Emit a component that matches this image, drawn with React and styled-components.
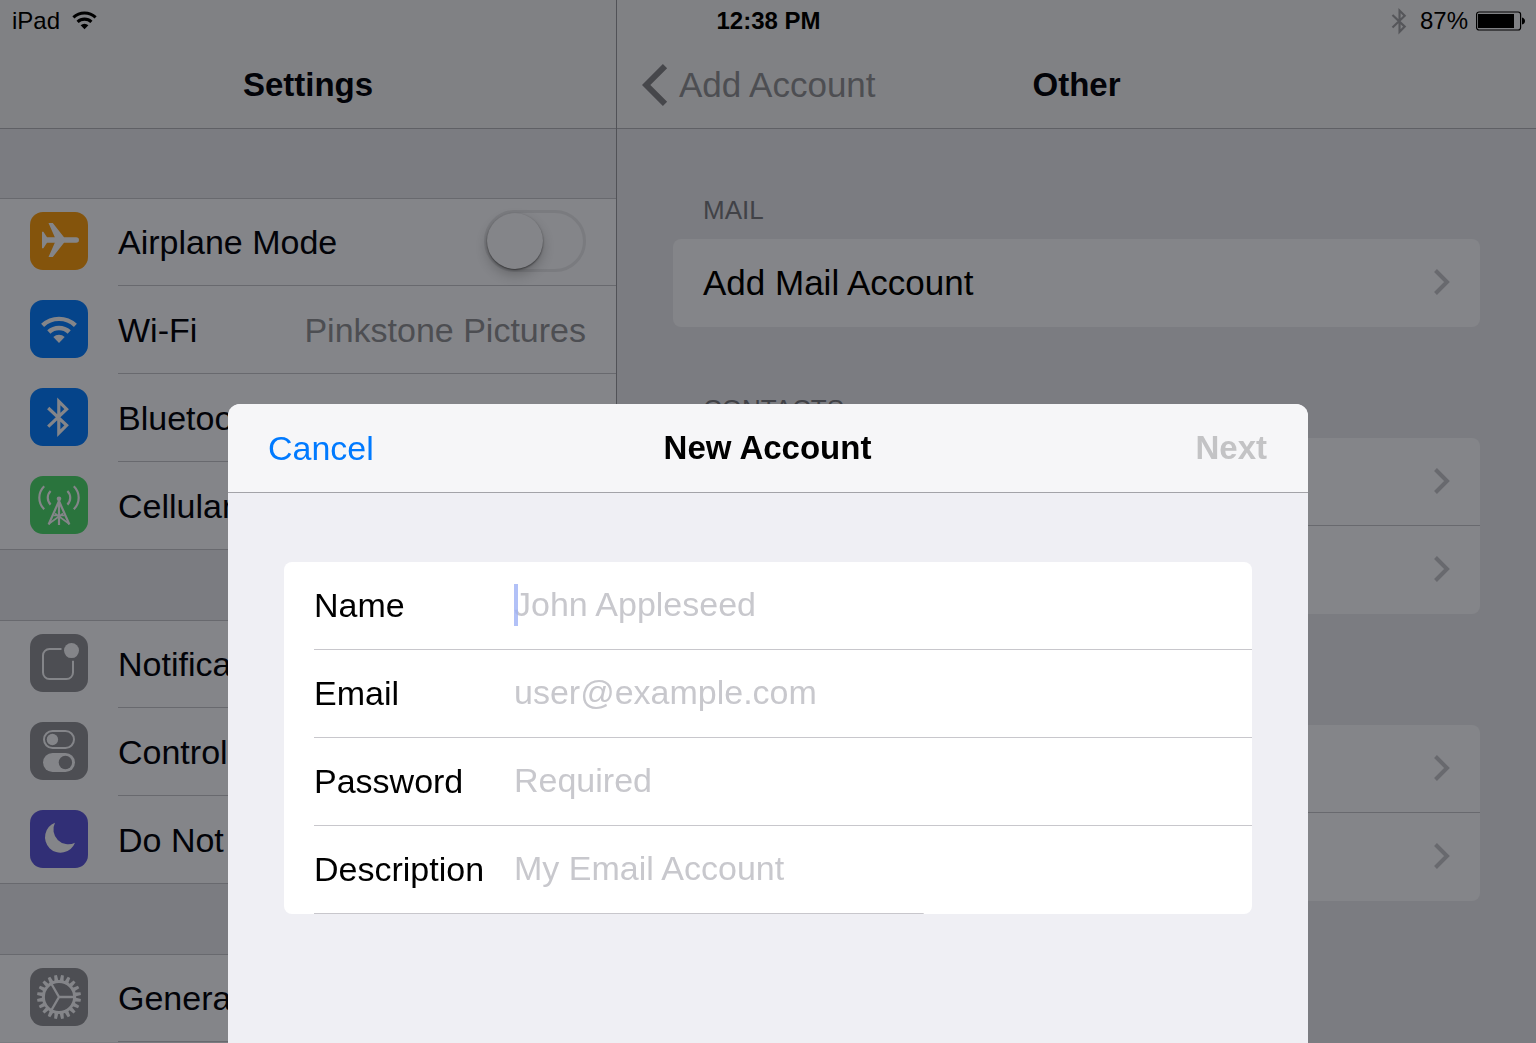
import styled, { createGlobalStyle } from "styled-components";

const colors = {
  bar: "#808184",
  pane: "#7b7c81",
  cell: "#848589",
  line: "#68696e",
  barLine: "#5f6065",
  text: "#020308",
  muted: "#4d4e52",
  glyph: "#848589",
};

const GlobalStyle = createGlobalStyle`
  * {
    box-sizing: border-box;
  }
  body {
    margin: 0;
    overflow: hidden;
    background-color: ${colors.pane};
    color: ${colors.text};
    font-family: "Liberation Sans", Arial, sans-serif;
    font-size: 34px;
    line-height: 40px;
  }
  button,
  input {
    margin: 0;
    padding: 0;
    border: 0;
    background: none;
    color: inherit;
    font: inherit;
    text-align: left;
  }
  ul {
    margin: 0;
    padding: 0;
    list-style: none;
  }
  svg {
    display: block;
    flex-shrink: 0;
  }
`;

const Screen = styled.div`
  display: grid;
  grid-template-columns: 308fr 460fr;
  height: 100vh;
  overflow: hidden;
`;

/* status bar */
const StatusBar = styled.header`
  position: absolute;
  top: 0;
  left: 0;
  right: 0;
  display: grid;
  grid-template-columns: 1fr auto 1fr;
  align-items: center;
  height: 41px;
  padding: 0 11px 0 12px;
  font-size: 24px;
  line-height: 28px;
  color: #000;
`;
const StatusGroup = styled.div`
  display: flex;
  align-items: center;
  justify-content: ${(props) => (props.$end ? "flex-end" : "flex-start")};
  gap: ${(props) => (props.$end ? "8px" : "12px")};
`;
const StatusPair = styled.span`
  display: flex;
  align-items: center;
  gap: 13px;
`;
const Clock = styled.time`
  font-weight: bold;
`;

/* panes */
const Pane = styled.section`
  min-width: 0;
  border-left: ${(props) => (props.$divided ? "1px solid #515257" : "0")};
`;
const NavBar = styled.div`
  display: grid;
  grid-template-columns: 1fr auto 1fr;
  align-items: center;
  height: 129px;
  padding: 41px 25px 0;
  background-color: ${colors.bar};
  border-bottom: 1px solid ${colors.barLine};
`;
const Title = styled.h1`
  grid-column: 2;
  margin: 0;
  font-size: 33px;
  font-weight: bold;
`;
const BackButton = styled.button`
  display: flex;
  align-items: center;
  gap: 11px;
  font-size: 35px;
  color: ${colors.muted};
`;

/* sidebar */
const SideList = styled.div`
  display: flex;
  flex-direction: column;
  gap: 70px;
  padding-top: 69px;
`;
const SideGroup = styled.ul`
  background-color: ${colors.cell};
  box-shadow: inset 0 1px ${colors.line};
`;
const SideItem = styled.li`
  border-bottom: ${(props) => (props.$last ? `1px solid ${colors.line}` : "0")};
`;
const SideRow = styled.button`
  display: flex;
  align-items: center;
  gap: 30px;
  width: 100%;
  height: ${(props) => (props.$last ? "87px" : "88px")};
  padding-left: 30px;
`;
const SideBody = styled.span`
  display: flex;
  flex: 1;
  align-items: center;
  justify-content: space-between;
  align-self: stretch;
  min-width: 0;
  padding-right: 30px;
  white-space: nowrap;
  border-bottom: ${(props) => (props.$last ? "0" : `1px solid ${colors.line}`)};
`;
const SideValue = styled.span`
  color: ${colors.muted};
`;
const IconTile = styled.span`
  flex-shrink: 0;
  width: 58px;
  height: 58px;
  margin-bottom: 2px;
  border-radius: 13px;
  background-color: ${(props) => props.$color};
  color: ${colors.glyph};
`;
const Switch = styled.input`
  appearance: none;
  width: 102px;
  height: 62px;
  margin-bottom: 2px;
  border: 3px solid #7a7b7f;
  border-radius: 31px;

  &::before {
    content: "";
    display: block;
    width: 56px;
    height: 56px;
    border-radius: 50%;
    background-color: ${colors.cell};
    box-shadow: 0 1px 2px rgba(0, 0, 0, 0.5), 0 6px 12px rgba(0, 0, 0, 0.22);
  }
  &:checked::before {
    margin-left: auto;
  }
`;

/* detail pane */
const Sections = styled.div`
  display: flex;
  flex-direction: column;
  gap: 70px;
  padding: 69px 56px 0;
`;
const SectionTitle = styled.h2`
  height: 41px;
  margin: 0;
  padding-left: 30px;
  font-size: 26px;
  font-weight: normal;
  line-height: 24px;
  color: #414247;
`;
const Card = styled.ul`
  overflow: hidden;
  border-radius: 8px;
  background-color: ${colors.cell};
`;
const CardRow = styled.button`
  display: flex;
  align-items: center;
  justify-content: space-between;
  width: 100%;
  height: 88px;
  padding: 0 30px;
  font-size: 35px;
  color: #000;
  border-bottom: ${(props) => (props.$last ? "0" : `1px solid ${colors.line}`)};

  svg {
    margin-left: auto;
    margin-bottom: 2px;
  }
`;

/* new account sheet */
const Backdrop = styled.div`
  position: fixed;
  inset: 0;
  display: flex;
  justify-content: center;
  padding-top: 404px;
`;
const Sheet = styled.form`
  width: 1080px;
  max-width: 100%;
  overflow: hidden;
  border-radius: 12px 12px 0 0;
  background-color: #efeff4;
`;
const SheetBar = styled.div`
  display: grid;
  grid-template-columns: 1fr auto 1fr;
  align-items: center;
  height: 89px;
  padding: 0 41px 0 40px;
  background-color: #f6f6f8;
  border-bottom: 1px solid #a3a3a8;
`;
const SheetTitle = styled.h2`
  margin: 0;
  font-size: 33px;
  font-weight: bold;
  color: #000;
`;
const CancelButton = styled.button`
  justify-self: start;
  color: #007aff;
`;
const NextButton = styled.button`
  justify-self: end;
  font-size: 33px;
  font-weight: bold;
  color: #c3c3c5;
`;
const Fields = styled.div`
  margin: 69px 56px;
  border-radius: 8px;
  background-color: #fff;
  color: #000;
`;
const Field = styled.div`
  display: grid;
  grid-template-columns: 200px 1fr;
  align-items: center;
  height: 88px;
  margin-left: 30px;
  padding-bottom: 3px;
  background: linear-gradient(#c8c7cc, #c8c7cc) left bottom no-repeat;
  background-size: ${(props) => (props.$last ? "65%" : "100%")} 1px;
`;
const InputWrap = styled.div`
  position: relative;
`;
const Input = styled.input`
  display: block;
  width: 100%;
  height: 42px;
  outline: 0;

  &::placeholder {
    color: #c8c8cd;
    opacity: 1;
  }
`;
const Caret = styled.span`
  position: absolute;
  top: 0;
  left: 0;
  width: 4px;
  height: 42px;
  background-color: #9fb1f5;
  opacity: 0.8;
`;

function WifiGlyph(props) {
  return (
    <svg fill="none" stroke="currentColor" aria-hidden="true" {...props}>
      <path d="M12.6 25.4A24 24 0 0 1 45.4 25.4" strokeWidth="4.4" />
      <path d="M18.8 32A15 15 0 0 1 39.2 32" strokeWidth="4.6" />
      <path d="M29 43L23.3 37A8.3 8.3 0 0 1 34.7 37Z" fill="currentColor" stroke="none" />
    </svg>
  );
}

function BluetoothGlyph(props) {
  return (
    <svg fill="none" stroke="currentColor" strokeWidth="3.2" aria-hidden="true" {...props}>
      <path d="M18.2 20L36.6 37.4L28.8 45.2V13.4L36.6 21.2L18.2 38.7" />
    </svg>
  );
}

function Battery() {
  return (
    <svg width="49" height="20" viewBox="0 0 49 20" aria-hidden="true">
      <rect x="0.6" y="1" width="44" height="18" rx="2.5" fill="none" stroke="currentColor" strokeWidth="1.2" />
      <rect x="2" y="3" width="36" height="14" fill="currentColor" />
      <path d="M46 6.5Q49 7.5 49 10T46 13.5Z" fill="currentColor" />
    </svg>
  );
}

function Chevron() {
  return (
    <svg width="16" height="26" viewBox="0 0 16 26" fill="none" aria-hidden="true">
      <path d="M1.5 1.5L13 13L1.5 24.5" stroke="#68696e" strokeWidth="4" />
    </svg>
  );
}

function BackChevron() {
  return (
    <svg width="26" height="42" viewBox="0 0 26 42" fill="none" aria-hidden="true">
      <path d="M23 2.2L4.2 21L23 39.8" stroke="#46474b" strokeWidth="6" />
    </svg>
  );
}

const TEETH = Array.from({ length: 20 }, (_, i) => i * 18 + 9);

const glyphs = {
  airplane: (
    <svg viewBox="0 0 58 58" fill="currentColor">
      <path d="M46.2 25.2H34L22.8 11H18.5L24.8 25.2H17L13.4 19.8H12V36.2H13.4L17 30.8H24.8L18.5 45H22.8L34 30.8H46.2A2.8 2.8 0 0 0 46.2 25.2Z" />
    </svg>
  ),
  wifi: <WifiGlyph viewBox="0 0 58 58" />,
  bluetooth: <BluetoothGlyph viewBox="0 0 58 58" />,
  cellular: (
    <svg viewBox="0 0 58 58" fill="none" stroke="currentColor" strokeWidth="2.2">
      <circle cx="29" cy="22.8" r="2.3" fill="currentColor" stroke="none" />
      <path d="M29 23V49M29 25L18.6 48.5M29 25L39.4 48.5" />
      <path d="M18.6 48L33 37.5M39.4 48L25 37.5M23.5 39.5H34.5" strokeWidth="1.6" />
      <path d="M14.2 10.2A16 16 0 0 0 14.2 33.2M43.8 10.2A16 16 0 0 1 43.8 33.2" />
      <path d="M20.6 15A9.6 9.6 0 0 0 20.6 28.6M37.4 15A9.6 9.6 0 0 1 37.4 28.6" />
    </svg>
  ),
  notifications: (
    <svg viewBox="0 0 58 58" fill="none" stroke="currentColor" strokeWidth="2">
      <path d="M31.5 15H19.5A6.5 6.5 0 0 0 13 21.5V38.5A6.5 6.5 0 0 0 19.5 45H36.5A6.5 6.5 0 0 0 43 38.5V26.7" />
      <circle cx="41.5" cy="16.6" r="7.5" fill="currentColor" stroke="none" />
    </svg>
  ),
  control: (
    <svg viewBox="0 0 58 58" fill="currentColor">
      <rect x="14" y="9" width="30" height="17" rx="8.5" fill="none" stroke="currentColor" strokeWidth="2" />
      <circle cx="22.4" cy="17.5" r="5.7" />
      <rect x="13" y="31" width="32" height="19" rx="9.5" />
      <circle cx="35.4" cy="40.5" r="6.7" fill="#4d4e53" />
    </svg>
  ),
  moon: (
    <svg viewBox="0 0 58 58" fill="currentColor">
      <path d="M25 12.7A15.5 15.5 0 1 0 45 32.7A14.9 14.9 0 0 1 25 12.7Z" />
    </svg>
  ),
  gear: (
    <svg viewBox="0 0 58 58" fill="none" stroke="currentColor">
      <circle cx="29" cy="29" r="15.6" strokeWidth="3" />
      <path d="M29 29H44M29 29L21.5 16M29 29L21.5 42" strokeWidth="2.4" />
      {TEETH.map((angle) => (
        <path
          key={angle}
          d="M27 13L27.6 7H30.4L31 13Z"
          transform={`rotate(${angle} 29 29)`}
          fill="currentColor"
          stroke="none"
        />
      ))}
    </svg>
  ),
};

const sideGroups = [
  [
    { label: "Airplane Mode", icon: "airplane", color: "#84540c", toggle: true },
    { label: "Wi-Fi", icon: "wifi", color: "#05448a", value: "Pinkstone Pictures" },
    { label: "Bluetooth", icon: "bluetooth", color: "#05448a" },
    { label: "Cellular Data", icon: "cellular", color: "#2a743d", last: true },
  ],
  [
    { label: "Notification Center", icon: "notifications", color: "#4d4e53" },
    { label: "Control Center", icon: "control", color: "#4d4e53" },
    { label: "Do Not Disturb", icon: "moon", color: "#312f76", last: true },
  ],
  [{ label: "General", icon: "gear", color: "#4d4e53" }],
];

const sections = [
  { title: "MAIL", rows: [{ name: "Add Mail Account", shown: true }] },
  { title: "CONTACTS", rows: [{ name: "Add LDAP Account" }, { name: "Add CardDAV Account" }] },
  { rows: [{ name: "Add CalDAV Account" }, { name: "Add Subscribed Calendar" }] },
];

const fields = [
  { id: "name", label: "Name", placeholder: "John Appleseed", active: true },
  { id: "email", label: "Email", placeholder: "user@example.com", type: "email" },
  { id: "password", label: "Password", placeholder: "Required", type: "password" },
  { id: "description", label: "Description", placeholder: "My Email Account" },
];

function App() {
  return (
    <>
      <GlobalStyle />
      <Screen>
        <Pane>
          <NavBar>
            <Title>Settings</Title>
          </NavBar>
          <SideList>
            {sideGroups.map((group) => (
              <SideGroup key={group[0].label}>
                {group.map(({ label, icon, color, value, toggle, last }) => (
                  <SideItem key={label} $last={last}>
                    <SideRow as={toggle ? "label" : "button"} $last={last}>
                      <IconTile $color={color}>{glyphs[icon]}</IconTile>
                      <SideBody $last={last}>
                        {label}
                        {value && <SideValue>{value}</SideValue>}
                        {toggle && <Switch type="checkbox" role="switch" />}
                      </SideBody>
                    </SideRow>
                  </SideItem>
                ))}
              </SideGroup>
            ))}
          </SideList>
        </Pane>

        <Pane $divided>
          <NavBar>
            <BackButton>
              <BackChevron />
              Add Account
            </BackButton>
            <Title>Other</Title>
          </NavBar>
          <Sections>
            {sections.map(({ title, rows }) => (
              <section key={rows[0].name}>
                <SectionTitle>{title}</SectionTitle>
                <Card>
                  {rows.map((row, i) => (
                    <li key={row.name}>
                      <CardRow aria-label={row.name} $last={i === rows.length - 1}>
                        {row.shown && row.name}
                        <Chevron />
                      </CardRow>
                    </li>
                  ))}
                </Card>
              </section>
            ))}
          </Sections>
        </Pane>
      </Screen>

      <StatusBar>
        <StatusGroup>
          iPad
          <WifiGlyph width="25" height="19" viewBox="11 16 36 28" />
        </StatusGroup>
        <Clock>12:38 PM</Clock>
        <StatusGroup $end>
          <StatusPair>
            <BluetoothGlyph width="16" height="28" viewBox="16 9 24 40" color="#55565a" />
            87%
          </StatusPair>
          <Battery />
        </StatusGroup>
      </StatusBar>

      <Backdrop>
        <Sheet role="dialog" aria-labelledby="sheet-title">
          <SheetBar>
            <CancelButton type="button">Cancel</CancelButton>
            <SheetTitle id="sheet-title">New Account</SheetTitle>
            <NextButton type="submit" disabled>
              Next
            </NextButton>
          </SheetBar>
          <Fields>
            {fields.map(({ id, label, placeholder, type, active }) => (
              <Field key={id} $last={id === "description"}>
                <label htmlFor={id}>{label}</label>
                <InputWrap>
                  <Input id={id} type={type || "text"} placeholder={placeholder} />
                  {active && <Caret />}
                </InputWrap>
              </Field>
            ))}
          </Fields>
        </Sheet>
      </Backdrop>
    </>
  );
}

export default App;
